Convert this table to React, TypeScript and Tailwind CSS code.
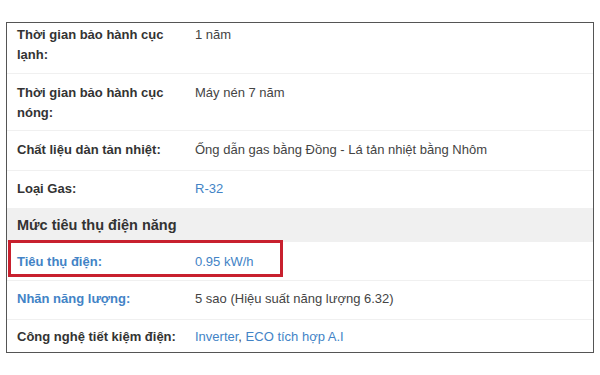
import React from "react";

type Spec = {
  label: string;
  value: React.ReactNode;
  labelLink?: boolean;
  rowClass: string;
};

const blue = "text-[#4283c6]";

function Row({ label, value, labelLink, rowClass }: Spec) {
  return (
    <div className={`flex border-b border-[#f0f0f0] leading-[20px] ${rowClass}`}>
      <div
        className={`w-[188px] shrink-0 pl-[10px] pr-[8px] font-bold ${
          labelLink ? blue : "text-[#333]"
        }`}
      >
        {label}
      </div>
      <div className="flex-1 text-[#444]">{value}</div>
    </div>
  );
}

export default function App() {
  return (
    <div
      className="w-[600px] h-[375px] bg-white pt-[22px] pl-[6px]"
      style={{ fontFamily: '"Liberation Sans", Arial, sans-serif' }}
    >
      <div className="w-[588px] h-[331px] border border-[#555] text-[13px] flex flex-col">
        <Row
          label="Thời gian bảo hành cục lạnh:"
          value="1 năm"
          rowClass="h-[51px] pt-[2px]"
        />
        <Row
          label="Thời gian bảo hành cục nóng:"
          value="Máy nén 7 năm"
          rowClass="h-[57px] pt-[9px]"
        />
        <Row
          label="Chất liệu dàn tản nhiệt:"
          value="Ống dẫn gas bằng Đồng - Lá tản nhiệt bằng Nhôm"
          rowClass="h-[40px] pt-[9px]"
        />
        <div className="flex h-[37px] pt-[8px] leading-[20px]">
          <div className="w-[188px] shrink-0 pl-[10px] font-bold text-[#333]">Loại Gas:</div>
          <div className={`flex-1 ${blue}`}>R-32</div>
        </div>
        <div className="h-[34px] bg-[#f0f0f0] pl-[10px] pt-[6px] text-[14.5px] font-bold leading-[22px] text-[#333]">
          Mức tiêu thụ điện năng
        </div>
        <div className="relative">
          <Row
            label="Tiêu thụ điện:"
            labelLink
            value={<span className={blue}>0.95 kW/h</span>}
            rowClass="h-[39px] pt-[10px]"
          />
          <div className="absolute left-[1px] top-[-2px] w-[275px] h-[37px] border-[3px] border-[#c8202e]" />
        </div>
        <Row
          label="Nhãn năng lượng:"
          labelLink
          value="5 sao (Hiệu suất năng lượng 6.32)"
          rowClass="h-[39px] pt-[8px]"
        />
        <div className="flex flex-1 pt-[7px] leading-[20px]">
          <div className="w-[188px] shrink-0 pl-[10px] font-bold text-[#333]">
            Công nghệ tiết kiệm điện:
          </div>
          <div className="flex-1 text-[#444]">
            <span className={blue}>Inverter</span>,{" "}
            <span className={blue}>ECO tích hợp A.I</span>
          </div>
        </div>
      </div>
    </div>
  );
}
